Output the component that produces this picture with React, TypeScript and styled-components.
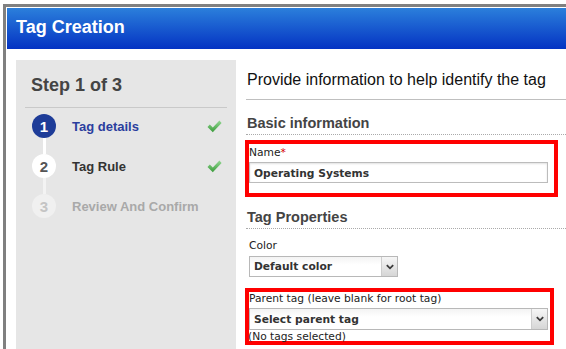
import styled, { createGlobalStyle } from "styled-components";

const GlobalStyle = createGlobalStyle`
  html, body {
    margin: 0;
    padding: 0;
    overflow: hidden;
    background: #fff;
  }
  body {
    font-family: "Liberation Sans", Arial, sans-serif;
  }
`;

const Window = styled.div`
  box-sizing: border-box;
  display: flex;
  flex-direction: column;
  width: 563px;
  height: 345px;
  margin: 4px 0 0 3px;
  border-top: 3px solid #808080;
  border-left: 3px solid #808080;
  padding: 1px 0 0 1px;
  background: #fff;
  overflow: hidden;
`;

const Header = styled.header`
  flex: none;
  height: 41px;
  line-height: 38px;
  padding-left: 9px;
  background: linear-gradient(to bottom, #2b7fdb, #0433c3);
  border-bottom: 1px solid #fff;
  color: #fff;
  font-size: 18px;
  font-weight: bold;
`;

const Body = styled.div`
  flex: 1;
  display: flex;
  padding: 10px 0 0 9px;
  min-height: 0;
`;

// left wizard column
const Sidebar = styled.aside`
  flex: none;
  width: 220px;
  background: #e6e6e6;
`;

const StepTitle = styled.h2`
  margin: 0 9px;
  padding: 14px 0 11px 6px;
  border-bottom: 1px solid #c9c9c9;
  font-size: 18px;
  line-height: 22px;
  font-weight: bold;
  color: #444;
`;

const StepList = styled.ol`
  list-style: none;
  margin: 0;
  padding: 6px 14px 0 16px;
  display: flex;
  flex-direction: column;
`;

const StepRow = styled.li`
  display: flex;
  align-items: center;
  height: 24px;
`;

const Circle = styled.span<{ $bg: string; $fg: string }>`
  flex: none;
  width: 24px;
  height: 24px;
  border-radius: 50%;
  display: flex;
  align-items: center;
  justify-content: center;
  background: ${(p) => p.$bg};
  color: ${(p) => p.$fg};
  font-size: 15px;
  font-weight: bold;
`;

const StepLabel = styled.span<{ $color: string }>`
  margin-left: 16px;
  font-size: 13px;
  font-weight: bold;
  color: ${(p) => p.$color};
`;

const CheckMark = styled.svg`
  margin-left: auto;
`;

const Connector = styled.span<{ $color: string }>`
  display: block;
  width: 3px;
  height: 16px;
  margin-left: 10.5px;
  background: ${(p) => p.$color};
`;

// right form column
const Content = styled.main`
  flex: 1;
  margin-left: 10px;
  min-width: 0;
`;

const Intro = styled.p`
  margin: 10px 0 0;
  padding: 0 0 9px 1px;
  border-bottom: 1px solid #bfbfbf;
  font-size: 16px;
  line-height: 20px;
  color: #111;
  white-space: nowrap;
`;

const SectionHeading = styled.h3<{ $top: number }>`
  margin: ${(p) => p.$top}px 0 0;
  padding: 0 0 2px 1px;
  border-bottom: 1px dotted #aaa;
  font-size: 14.5px;
  line-height: 18px;
  font-weight: bold;
  color: #444;
`;

const Highlight = styled.div<{ $width: number; $top: number; $pad: string }>`
  box-sizing: border-box;
  width: ${(p) => p.$width}px;
  margin: ${(p) => p.$top}px 0 0 -1px;
  padding: ${(p) => p.$pad};
  border: 4px solid #ff0000;
`;

const Field = styled.div`
  margin-top: 10px;
  padding-left: 3px;
`;

const FieldLabel = styled.div`
  font-family: "DejaVu Sans", Verdana, sans-serif;
  font-size: 10.7px;
  line-height: 14px;
  color: #222;
`;

const Required = styled.span`
  color: #d40000;
`;

const TextField = styled.input`
  display: block;
  box-sizing: border-box;
  width: 299px;
  height: 21px;
  margin: 2px 0 0;
  padding: 1px 4px 0;
  border: 1px solid #bcbcbc;
  box-shadow: inset 0 1px 2px rgba(0, 0, 0, 0.12);
  font-family: "DejaVu Sans", Verdana, sans-serif;
  font-size: 10.7px;
  font-weight: bold;
  color: #333;
  outline: none;
`;

const SelectBox = styled.div<{ $width: number; $height: number; $top: number }>`
  display: flex;
  box-sizing: border-box;
  width: ${(p) => p.$width}px;
  height: ${(p) => p.$height}px;
  margin-top: ${(p) => p.$top}px;
  border: 1px solid #b8b8b8;
  background: linear-gradient(to bottom, #f3f3f3, #fff 40%);
`;

const SelectValue = styled.span`
  flex: 1;
  display: flex;
  align-items: center;
  padding-left: 4px;
  font-family: "DejaVu Sans", Verdana, sans-serif;
  font-size: 10.7px;
  font-weight: bold;
  color: #333;
`;

const SelectArrow = styled.span`
  flex: none;
  width: 15px;
  display: flex;
  align-items: center;
  justify-content: center;
  border-left: 1px solid #cdcdcd;
  background: linear-gradient(to bottom, #f6f6f6, #d6d6d6);
`;

const Hint = styled.div`
  margin: 0 0 -2px -1px;
  font-family: "DejaVu Sans", Verdana, sans-serif;
  font-size: 10.7px;
  line-height: 13px;
  color: #222;
`;

interface Step {
  n: number;
  label: string;
  done: boolean;
  circleBg: string;
  circleFg: string;
  labelColor: string;
  line?: string;
}

const steps: Step[] = [
  { n: 1, label: "Tag details", done: true, circleBg: "#1e3c98", circleFg: "#fff", labelColor: "#2b3e9e" },
  { n: 2, label: "Tag Rule", done: true, circleBg: "#fff", circleFg: "#555", labelColor: "#333", line: "#fff" },
  { n: 3, label: "Review And Confirm", done: false, circleBg: "#f0f0f0", circleFg: "#c4c4c4", labelColor: "#a9a9a9", line: "#f3f3f3" },
];

const Check = ({ id }: { id: string }) => (
  <CheckMark width="15" height="13" viewBox="0 0 15 13">
    <defs>
      <linearGradient id={id} x1="0" y1="0" x2="0" y2="1">
        <stop offset="0" stopColor="#92d892" />
        <stop offset="1" stopColor="#3b9b3b" />
      </linearGradient>
    </defs>
    <path d="M0.5 7 L2.8 4.6 L5.8 7.4 L12.4 0.6 L14.6 2.9 L5.8 12.2 Z" fill={`url(#${id})`} />
  </CheckMark>
);

const Chevron = () => (
  <svg width="8" height="6" viewBox="0 0 8 6">
    <path d="M0.8 1.2 L4 4.3 L7.2 1.2" stroke="#3a3a3a" strokeWidth="1.8" fill="none" />
  </svg>
);

const App = () => {
  return (
    <>
      <GlobalStyle />
      <Window>
        <Header>Tag Creation</Header>
        <Body>
          <Sidebar>
            <StepTitle>Step 1 of 3</StepTitle>
            <StepList>
              {steps.map((s) => (
                <div key={s.n}>
                  {s.line && <Connector $color={s.line} />}
                  <StepRow>
                    <Circle $bg={s.circleBg} $fg={s.circleFg}>
                      {s.n}
                    </Circle>
                    <StepLabel $color={s.labelColor}>{s.label}</StepLabel>
                    {s.done && <Check id={`check-${s.n}`} />}
                  </StepRow>
                </div>
              ))}
            </StepList>
          </Sidebar>

          <Content>
            <Intro>Provide information to help identify the tag</Intro>

            <SectionHeading $top={14}>Basic information</SectionHeading>
            <Highlight $width={313} $top={5} $pad="2px 0 10px 0">
              <FieldLabel>
                Name<Required>*</Required>
              </FieldLabel>
              <TextField defaultValue="Operating Systems" readOnly />
            </Highlight>

            <SectionHeading $top={11}>Tag Properties</SectionHeading>
            <Field>
              <FieldLabel>Color</FieldLabel>
              <SelectBox $width={149} $height={21} $top={3}>
                <SelectValue>Default color</SelectValue>
                <SelectArrow>
                  <Chevron />
                </SelectArrow>
              </SelectBox>
            </Field>

            <Highlight $width={309} $top={11} $pad="0">
              <FieldLabel>Parent tag (leave blank for root tag)</FieldLabel>
              <SelectBox $width={299} $height={22} $top={2}>
                <SelectValue>Select parent tag</SelectValue>
                <SelectArrow>
                  <Chevron />
                </SelectArrow>
              </SelectBox>
              <Hint>(No tags selected)</Hint>
            </Highlight>
          </Content>
        </Body>
      </Window>
    </>
  );
};

export default App;
